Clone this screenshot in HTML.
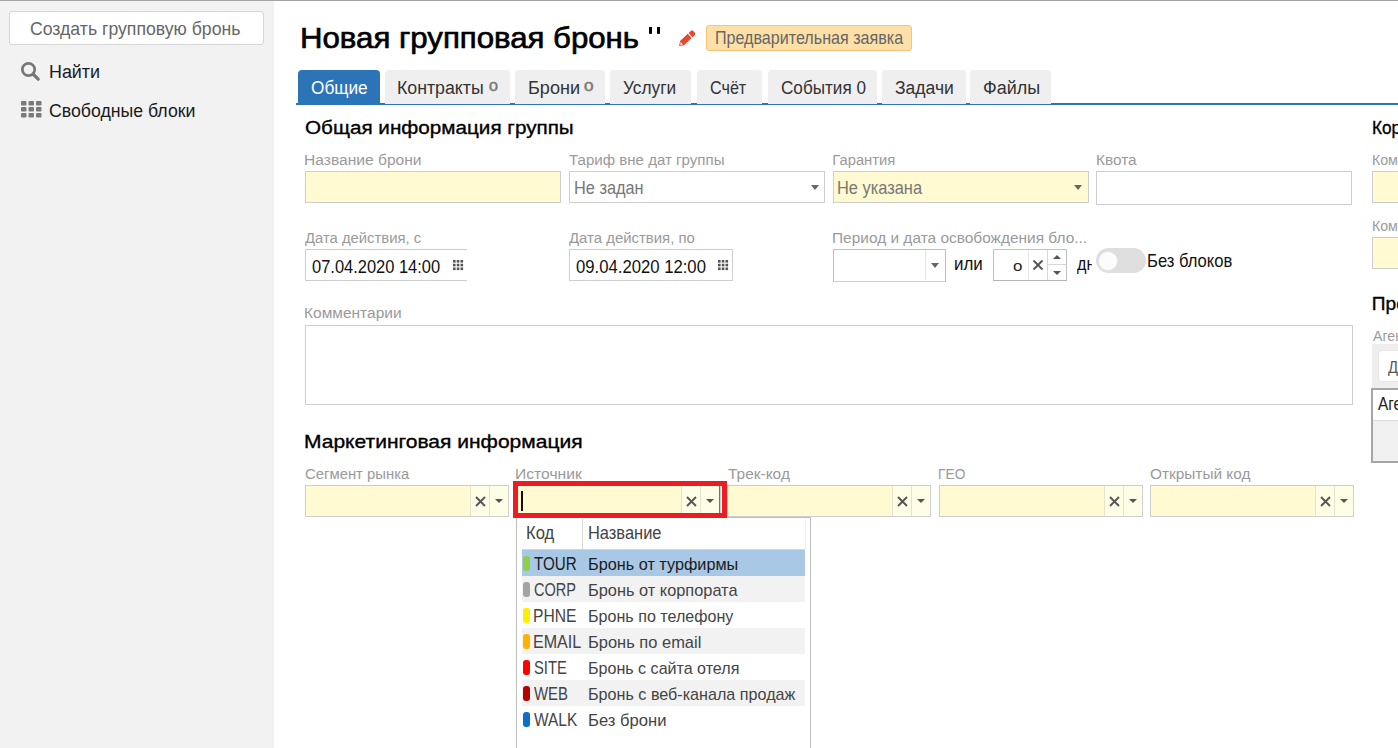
<!DOCTYPE html>
<html><head><meta charset="utf-8">
<style>
*{box-sizing:border-box;margin:0;padding:0}
html,body{width:1398px;height:748px;overflow:hidden;background:#fff;font-family:"Liberation Sans",sans-serif;color:#222;position:relative}
.a{position:absolute;white-space:nowrap}
</style></head><body>
<div class="a" style="left:0px;top:0px;width:1398px;height:1px;background:#a3a3a3;"></div>
<div class="a" style="left:0px;top:1px;width:274px;height:747px;background:#f2f2f2;"></div>
<div class="a" style="left:9px;top:11px;width:255px;height:34px;background:#fff;border:1px solid #d6d6d6;border-radius:3px;"></div>
<div class="a" style="left:30.42px;top:20.16px;font-size:18.72px;line-height:18.72px;color:#666;transform:scaleX(0.9438);transform-origin:0 0;">Создать групповую бронь</div>
<svg class="a" style="left:20px;top:61px" width="21" height="21" viewBox="0 0 21 21">
<circle cx="8.5" cy="8.5" r="6.2" fill="none" stroke="#777" stroke-width="2.7"/>
<line x1="13" y1="13" x2="18.2" y2="18.2" stroke="#777" stroke-width="3.2" stroke-linecap="round"/></svg>
<div class="a" style="left:48.57px;top:62.64px;font-size:18.85px;line-height:18.85px;color:#1a1a1a;transform:scaleX(0.9488);transform-origin:0 0;">Найти</div>
<svg class="a" style="left:21px;top:101px" width="21" height="17" viewBox="0 0 21 17"><g fill="#7a7a7a"><rect x="0.0" y="0" width="5.5" height="4.5" rx="1"/><rect x="7.5" y="0" width="5.5" height="4.5" rx="1"/><rect x="15.0" y="0" width="5.5" height="4.5" rx="1"/><rect x="0.0" y="6" width="5.5" height="4.5" rx="1"/><rect x="7.5" y="6" width="5.5" height="4.5" rx="1"/><rect x="15.0" y="6" width="5.5" height="4.5" rx="1"/><rect x="0.0" y="12" width="5.5" height="4.5" rx="1"/><rect x="7.5" y="12" width="5.5" height="4.5" rx="1"/><rect x="15.0" y="12" width="5.5" height="4.5" rx="1"/></g></svg>
<div class="a" style="left:49.11px;top:102.27px;font-size:18.58px;line-height:18.58px;color:#1a1a1a;transform:scaleX(0.9529);transform-origin:0 0;">Свободные блоки</div>
<div class="a" style="left:299.51px;top:23.71px;font-size:28.69px;line-height:28.69px;color:#000;-webkit-text-stroke:0.65px #000;transform:scaleX(1.0867);transform-origin:0 0;">Новая групповая бронь</div>
<div class="a" style="left:649px;top:27px;width:3.4px;height:7px;background:#000;border-radius:0 0 1px 1px;"></div>
<div class="a" style="left:657px;top:27px;width:3.2px;height:7px;background:#000;border-radius:0 0 1px 1px;"></div>
<svg class="a" style="left:678px;top:29px" width="20" height="19" viewBox="0 0 20 19">
<g transform="translate(1.0,16.9) rotate(-43)">
<path d="M0,0 L4.2,-2.9 L14.6,-2.9 L14.6,2.9 L4.2,2.9 Z" fill="#e64a2e"/>
<path d="M1.6,0 L3.9,-1.6 L3.9,1.6 Z" fill="#fff"/>
<path d="M15.7,-2.9 L18.9,-2.9 Q20.6,-2.9 20.6,-1.2 L20.6,1.2 Q20.6,2.9 18.9,2.9 L15.7,2.9 Z" fill="#e64a2e"/>
</g></svg>
<div class="a" style="left:706px;top:25px;width:206px;height:26px;background:#fde0a8;border:1px solid #f8c27a;border-radius:3px;"></div>
<div class="a" style="left:714.71px;top:30.08px;font-size:17.63px;line-height:17.63px;color:#666;transform:scaleX(0.9139);transform-origin:0 0;">Предварительная заявка</div>
<div class="a" style="left:296px;top:103px;width:1102px;height:2px;background:#2c74b8;"></div>
<div class="a" style="left:298px;top:70px;width:82px;height:34px;background:#2c74b8;border-radius:4px 4px 0 0;"></div>
<div class="a" style="left:311.14px;top:77.72px;font-size:18.99px;line-height:18.99px;color:#fff;transform:scaleX(0.9079);transform-origin:0 0;">Общие</div>
<div class="a" style="left:385px;top:70px;width:125px;height:34px;background:#efefef;border-radius:4px 4px 0 0;"></div>
<div class="a" style="left:397.48px;top:77.72px;font-size:18.99px;line-height:18.99px;color:#333;transform:scaleX(0.9343);transform-origin:0 0;">Контракты</div>
<div class="a" style="left:489.26px;top:80.21px;font-size:12.98px;line-height:12.98px;color:#777;-webkit-text-stroke:0.45px #777;transform:scaleX(1.2359);transform-origin:0 0;">0</div>
<div class="a" style="left:515px;top:70px;width:90px;height:34px;background:#efefef;border-radius:4px 4px 0 0;"></div>
<div class="a" style="left:527.56px;top:77.72px;font-size:18.99px;line-height:18.99px;color:#333;transform:scaleX(0.9509);transform-origin:0 0;">Брони</div>
<div class="a" style="left:583.62px;top:80.21px;font-size:12.98px;line-height:12.98px;color:#777;-webkit-text-stroke:0.45px #777;transform:scaleX(1.3162);transform-origin:0 0;">0</div>
<div class="a" style="left:610px;top:70px;width:81px;height:34px;background:#efefef;border-radius:4px 4px 0 0;"></div>
<div class="a" style="left:623.18px;top:77.72px;font-size:18.99px;line-height:18.99px;color:#333;transform:scaleX(0.9100);transform-origin:0 0;">Услуги</div>
<div class="a" style="left:697px;top:70px;width:65px;height:34px;background:#efefef;border-radius:4px 4px 0 0;"></div>
<div class="a" style="left:709.59px;top:77.72px;font-size:18.99px;line-height:18.99px;color:#333;transform:scaleX(0.8502);transform-origin:0 0;">Счёт</div>
<div class="a" style="left:768px;top:70px;width:109px;height:34px;background:#efefef;border-radius:4px 4px 0 0;"></div>
<div class="a" style="left:780.54px;top:77.72px;font-size:18.99px;line-height:18.99px;color:#333;transform:scaleX(0.9021);transform-origin:0 0;">События 0</div>
<div class="a" style="left:882px;top:70px;width:84px;height:34px;background:#efefef;border-radius:4px 4px 0 0;"></div>
<div class="a" style="left:894.97px;top:77.72px;font-size:18.99px;line-height:18.99px;color:#333;transform:scaleX(0.9223);transform-origin:0 0;">Задачи</div>
<div class="a" style="left:970px;top:70px;width:81px;height:34px;background:#efefef;border-radius:4px 4px 0 0;"></div>
<div class="a" style="left:982.62px;top:77.72px;font-size:18.99px;line-height:18.99px;color:#333;transform:scaleX(0.9495);transform-origin:0 0;">Файлы</div>
<div class="a" style="left:304.57px;top:117.81px;font-size:19.13px;line-height:19.13px;color:#000;-webkit-text-stroke:0.35px #000;transform:scaleX(1.0817);transform-origin:0 0;">Общая информация группы</div>
<div class="a" style="left:304.12px;top:432.50px;font-size:18.31px;line-height:18.31px;color:#000;-webkit-text-stroke:0.35px #000;transform:scaleX(1.1487);transform-origin:0 0;">Маркетинговая информация</div>
<div class="a" style="left:1372.02px;top:117.81px;font-size:19.13px;line-height:19.13px;color:#000;-webkit-text-stroke:0.35px #000;transform:scaleX(0.9000);transform-origin:0 0;">Корпоративный клиент</div>
<div class="a" style="left:1371.87px;top:293.81px;font-size:19.13px;line-height:19.13px;color:#000;-webkit-text-stroke:0.35px #000;">Продажи</div>
<div class="a" style="left:304.05px;top:153.01px;font-size:14.76px;line-height:14.76px;color:#9a9a9a;transform:scaleX(1.0564);transform-origin:0 0;">Название брони</div>
<div class="a" style="left:569.00px;top:153.01px;font-size:14.76px;line-height:14.76px;color:#9a9a9a;transform:scaleX(1.0215);transform-origin:0 0;">Тариф вне дат группы</div>
<div class="a" style="left:832.32px;top:153.01px;font-size:14.76px;line-height:14.76px;color:#9a9a9a;">Гарантия</div>
<div class="a" style="left:1095.57px;top:153.01px;font-size:14.76px;line-height:14.76px;color:#9a9a9a;transform:scaleX(1.0430);transform-origin:0 0;">Квота</div>
<div class="a" style="left:305.15px;top:231.01px;font-size:14.76px;line-height:14.76px;color:#9a9a9a;transform:scaleX(1.0044);transform-origin:0 0;">Дата действия, с</div>
<div class="a" style="left:569.15px;top:231.01px;font-size:14.76px;line-height:14.76px;color:#9a9a9a;transform:scaleX(1.0113);transform-origin:0 0;">Дата действия, по</div>
<div class="a" style="left:832.06px;top:231.01px;font-size:14.76px;line-height:14.76px;color:#9a9a9a;transform:scaleX(1.0470);transform-origin:0 0;">Период и дата освобождения бло...</div>
<div class="a" style="left:304.16px;top:306.01px;font-size:14.76px;line-height:14.76px;color:#9a9a9a;transform:scaleX(1.0502);transform-origin:0 0;">Комментарии</div>
<div class="a" style="left:304.66px;top:467.01px;font-size:14.76px;line-height:14.76px;color:#9a9a9a;transform:scaleX(1.0073);transform-origin:0 0;">Сегмент рынка</div>
<div class="a" style="left:515.05px;top:467.01px;font-size:14.76px;line-height:14.76px;color:#9a9a9a;transform:scaleX(1.0610);transform-origin:0 0;">Источник</div>
<div class="a" style="left:727.69px;top:467.01px;font-size:14.76px;line-height:14.76px;color:#9a9a9a;transform:scaleX(1.0481);transform-origin:0 0;">Трек-код</div>
<div class="a" style="left:938.30px;top:467.01px;font-size:14.76px;line-height:14.76px;color:#9a9a9a;transform:scaleX(0.9327);transform-origin:0 0;">ГЕО</div>
<div class="a" style="left:1149.83px;top:467.01px;font-size:14.76px;line-height:14.76px;color:#9a9a9a;transform:scaleX(1.0428);transform-origin:0 0;">Открытый код</div>
<div class="a" style="left:1371.87px;top:153.01px;font-size:14.76px;line-height:14.76px;color:#9a9a9a;transform:scaleX(0.9600);transform-origin:0 0;">Компания</div>
<div class="a" style="left:1371.87px;top:219.01px;font-size:14.76px;line-height:14.76px;color:#9a9a9a;transform:scaleX(0.9600);transform-origin:0 0;">Компания</div>
<div class="a" style="left:1373.00px;top:329.01px;font-size:14.76px;line-height:14.76px;color:#9a9a9a;transform:scaleX(0.9600);transform-origin:0 0;">Агентство</div>
<div class="a" style="left:305px;top:171px;width:256px;height:32px;background:#fffad2;border:1px solid #cecece;"></div>
<div class="a" style="left:569px;top:171px;width:256px;height:32px;background:#fff;border:1px solid #cecece;"></div>
<div class="a" style="left:573.89px;top:178.63px;font-size:18.03px;line-height:18.03px;color:#777;transform:scaleX(0.9066);transform-origin:0 0;">Не задан</div>
<div class="a" style="left:811px;top:185px;width:0;height:0;border-left:4.0px solid transparent;border-right:4.0px solid transparent;border-top:5px solid #666"></div>
<div class="a" style="left:833px;top:171px;width:256px;height:32px;background:#fffad2;border:1px solid #cecece;"></div>
<div class="a" style="left:837.39px;top:178.63px;font-size:18.03px;line-height:18.03px;color:#777;transform:scaleX(0.9104);transform-origin:0 0;">Не указана</div>
<div class="a" style="left:1074px;top:185px;width:0;height:0;border-left:4.0px solid transparent;border-right:4.0px solid transparent;border-top:5px solid #666"></div>
<div class="a" style="left:1096px;top:171px;width:256px;height:34px;background:#fff;border:1px solid #cecece;"></div>
<div class="a" style="left:305px;top:249px;width:162px;height:32px;background:#fff;border:1px solid #cecece;border-right:none;"></div>
<div class="a" style="left:312.34px;top:257.70px;font-size:18.31px;line-height:18.31px;color:#111;transform:scaleX(0.8994);transform-origin:0 0;">07.04.2020 14:00</div>
<svg class="a" style="left:453px;top:260px" width="11" height="11" viewBox="0 0 11 11"><g fill="#555"><rect x="0.0" y="0.0" width="2.6" height="2.6"/><rect x="3.75" y="0.0" width="2.6" height="2.6"/><rect x="7.5" y="0.0" width="2.6" height="2.6"/><rect x="0.0" y="3.75" width="2.6" height="2.6"/><rect x="3.75" y="3.75" width="2.6" height="2.6"/><rect x="7.5" y="3.75" width="2.6" height="2.6"/><rect x="0.0" y="7.5" width="2.6" height="2.6"/><rect x="3.75" y="7.5" width="2.6" height="2.6"/><rect x="7.5" y="7.5" width="2.6" height="2.6"/></g></svg>
<div class="a" style="left:569px;top:249px;width:164px;height:32px;background:#fff;border:1px solid #cecece;"></div>
<div class="a" style="left:576.33px;top:257.70px;font-size:18.31px;line-height:18.31px;color:#111;transform:scaleX(0.9122);transform-origin:0 0;">09.04.2020 12:00</div>
<svg class="a" style="left:718px;top:260px" width="11" height="11" viewBox="0 0 11 11"><g fill="#555"><rect x="0.0" y="0.0" width="2.6" height="2.6"/><rect x="3.75" y="0.0" width="2.6" height="2.6"/><rect x="7.5" y="0.0" width="2.6" height="2.6"/><rect x="0.0" y="3.75" width="2.6" height="2.6"/><rect x="3.75" y="3.75" width="2.6" height="2.6"/><rect x="7.5" y="3.75" width="2.6" height="2.6"/><rect x="0.0" y="7.5" width="2.6" height="2.6"/><rect x="3.75" y="7.5" width="2.6" height="2.6"/><rect x="7.5" y="7.5" width="2.6" height="2.6"/></g></svg>
<div class="a" style="left:833px;top:249px;width:113px;height:33px;background:#fff;border:1px solid #c0c0c0;border-bottom-color:#cfcfcf;"></div>
<div class="a" style="left:925px;top:250px;width:1px;height:30px;background:#e3e3e3;"></div>
<div class="a" style="left:931px;top:263px;width:0;height:0;border-left:4.0px solid transparent;border-right:4.0px solid transparent;border-top:5px solid #666"></div>
<div class="a" style="left:954.42px;top:254.97px;font-size:18.94px;line-height:18.94px;color:#111;transform:scaleX(0.8935);transform-origin:0 0;">или</div>
<div class="a" style="left:993px;top:249px;width:74px;height:32px;background:#fff;border:1px solid #c2c2c2;border-bottom-color:#b5b5b5;"></div>
<div class="a" style="left:1012.93px;top:258.99px;font-size:14.77px;line-height:14.77px;color:#222;transform:scaleX(1.1423);transform-origin:0 0;">о</div>
<div class="a" style="left:1028px;top:250px;width:1px;height:30px;background:#e6e6e6;"></div>
<div class="a" style="left:1047px;top:250px;width:1px;height:30px;background:#d8d8d8;"></div>
<div class="a" style="left:1048px;top:264px;width:18px;height:1px;background:#d8d8d8;"></div>
<svg class="a" style="left:1032px;top:259px" width="12" height="12" viewBox="0 0 12 12"><path d="M1.5 1.5L10.5 10.5M10.5 1.5L1.5 10.5" stroke="#555" stroke-width="1.8"/></svg>
<div class="a" style="left:1053px;top:255px;width:0;height:0;border-left:4px solid transparent;border-right:4px solid transparent;border-bottom:4px solid #555"></div>
<div class="a" style="left:1053px;top:271px;width:0;height:0;border-left:4.0px solid transparent;border-right:4.0px solid transparent;border-top:4px solid #555"></div>
<div class="a" style="left:1076.84px;top:255.29px;font-size:18.56px;line-height:18.56px;color:#111;transform:scaleX(0.8700);transform-origin:0 0;width:16.7px;overflow:hidden;">дн</div>
<div class="a" style="left:1096px;top:248px;width:50px;height:25px;background:#dedede;border-radius:13px;"></div>
<div class="a" style="left:1098px;top:251px;width:20px;height:20px;background:#fcfcfc;border:1px solid #e6e6e6;border-radius:50%;"></div>
<div class="a" style="left:1147.27px;top:251.50px;font-size:18.31px;line-height:18.31px;color:#111;transform:scaleX(0.9064);transform-origin:0 0;">Без блоков</div>
<div class="a" style="left:305px;top:325px;width:1048px;height:80px;background:#fff;border:1px solid #cecece;"></div>
<div class="a" style="left:305px;top:485px;width:204px;height:32px;background:#fffad2;border:1px solid #cecece;"></div>
<div class="a" style="left:470px;top:486px;width:38px;height:30px;background:#fffde6;"></div>
<div class="a" style="left:470px;top:486px;width:1px;height:30px;background:#e6e2cc;"></div>
<div class="a" style="left:489px;top:486px;width:1px;height:30px;background:#e6e2cc;"></div>
<svg class="a" style="left:475px;top:496px" width="11" height="11" viewBox="0 0 11 11"><path d="M1 1L10 10M10 1L1 10" stroke="#555" stroke-width="1.9"/></svg>
<div class="a" style="left:495px;top:499px;width:0;height:0;border-left:4.0px solid transparent;border-right:4.0px solid transparent;border-top:4px solid #555"></div>
<div class="a" style="left:516px;top:485px;width:205px;height:32px;background:#fffad2;border:1px solid #cecece;"></div>
<div class="a" style="left:681px;top:486px;width:39px;height:30px;background:#fffde6;"></div>
<div class="a" style="left:681px;top:486px;width:1px;height:30px;background:#e6e2cc;"></div>
<div class="a" style="left:700px;top:486px;width:1px;height:30px;background:#e6e2cc;"></div>
<svg class="a" style="left:686px;top:496px" width="11" height="11" viewBox="0 0 11 11"><path d="M1 1L10 10M10 1L1 10" stroke="#555" stroke-width="1.9"/></svg>
<div class="a" style="left:706px;top:499px;width:0;height:0;border-left:4.0px solid transparent;border-right:4.0px solid transparent;border-top:4px solid #555"></div>
<div class="a" style="left:727px;top:485px;width:204px;height:32px;background:#fffad2;border:1px solid #cecece;"></div>
<div class="a" style="left:892px;top:486px;width:38px;height:30px;background:#fffde6;"></div>
<div class="a" style="left:892px;top:486px;width:1px;height:30px;background:#e6e2cc;"></div>
<div class="a" style="left:911px;top:486px;width:1px;height:30px;background:#e6e2cc;"></div>
<svg class="a" style="left:897px;top:496px" width="11" height="11" viewBox="0 0 11 11"><path d="M1 1L10 10M10 1L1 10" stroke="#555" stroke-width="1.9"/></svg>
<div class="a" style="left:917px;top:499px;width:0;height:0;border-left:4.0px solid transparent;border-right:4.0px solid transparent;border-top:4px solid #555"></div>
<div class="a" style="left:939px;top:485px;width:204px;height:32px;background:#fffad2;border:1px solid #cecece;"></div>
<div class="a" style="left:1104px;top:486px;width:38px;height:30px;background:#fffde6;"></div>
<div class="a" style="left:1104px;top:486px;width:1px;height:30px;background:#e6e2cc;"></div>
<div class="a" style="left:1123px;top:486px;width:1px;height:30px;background:#e6e2cc;"></div>
<svg class="a" style="left:1109px;top:496px" width="11" height="11" viewBox="0 0 11 11"><path d="M1 1L10 10M10 1L1 10" stroke="#555" stroke-width="1.9"/></svg>
<div class="a" style="left:1129px;top:499px;width:0;height:0;border-left:4.0px solid transparent;border-right:4.0px solid transparent;border-top:4px solid #555"></div>
<div class="a" style="left:1150px;top:485px;width:204px;height:32px;background:#fffad2;border:1px solid #cecece;"></div>
<div class="a" style="left:1315px;top:486px;width:38px;height:30px;background:#fffde6;"></div>
<div class="a" style="left:1315px;top:486px;width:1px;height:30px;background:#e6e2cc;"></div>
<div class="a" style="left:1334px;top:486px;width:1px;height:30px;background:#e6e2cc;"></div>
<svg class="a" style="left:1320px;top:496px" width="11" height="11" viewBox="0 0 11 11"><path d="M1 1L10 10M10 1L1 10" stroke="#555" stroke-width="1.9"/></svg>
<div class="a" style="left:1340px;top:499px;width:0;height:0;border-left:4.0px solid transparent;border-right:4.0px solid transparent;border-top:4px solid #555"></div>
<div class="a" style="left:1372px;top:171px;width:60px;height:32px;background:#fffad2;border:1px solid #cecece;"></div>
<div class="a" style="left:1372px;top:237px;width:60px;height:32px;background:#fffad2;border:1px solid #cecece;"></div>
<div class="a" style="left:1372px;top:344px;width:40px;height:45px;background:#eeeeee;"></div>
<div class="a" style="left:1378px;top:350px;width:40px;height:32px;background:#fff;border:1px solid #e6e6e6;border-radius:4px;"></div>
<div class="a" style="left:1387.85px;top:358.84px;font-size:17.08px;line-height:17.08px;color:#555;transform:scaleX(0.8700);transform-origin:0 0;">Добавить</div>
<div class="a" style="left:1371px;top:388px;width:40px;height:75px;background:#f0f0f0;border:2px solid #a6a6a6;border-right:none;"></div>
<div class="a" style="left:1373px;top:390px;width:40px;height:31px;background:#fff;border-bottom:1px solid #dedede;"></div>
<div class="a" style="left:1377.70px;top:396.46px;font-size:17.76px;line-height:17.76px;color:#222;transform:scaleX(0.8700);transform-origin:0 0;">Агент</div>
<div class="a" style="left:516px;top:517px;width:295px;height:240px;background:#fff;border:1px solid #bdbdbd;"></div>
<div class="a" style="left:582px;top:519px;width:1px;height:30px;background:#d8d8d8;"></div>
<div class="a" style="left:522px;top:549px;width:283px;height:1px;background:#d6d3d0;"></div>
<div class="a" style="left:805px;top:519px;width:1px;height:30px;background:#efefef;"></div>
<div class="a" style="left:525.77px;top:525.08px;font-size:17.63px;line-height:17.63px;color:#444;transform:scaleX(0.9445);transform-origin:0 0;">Код</div>
<div class="a" style="left:587.88px;top:525.08px;font-size:17.63px;line-height:17.63px;color:#444;transform:scaleX(0.9334);transform-origin:0 0;">Название</div>
<div class="a" style="left:522px;top:550px;width:283px;height:26px;background:#a9c8e6;"></div>
<div class="a" style="left:523px;top:556px;width:7px;height:15px;background:#8ed04c;border-radius:3px;"></div>
<div class="a" style="left:534.00px;top:554.55px;font-size:18.60px;line-height:18.60px;color:#1a1a1a;transform:scaleX(0.8161);transform-origin:0 0;">TOUR</div>
<div class="a" style="left:588.20px;top:555.73px;font-size:17.22px;line-height:17.22px;color:#1a1a1a;transform:scaleX(0.9447);transform-origin:0 0;">Бронь от турфирмы</div>
<div class="a" style="left:522px;top:576px;width:283px;height:26px;background:#f2f2f2;"></div>
<div class="a" style="left:523px;top:582px;width:7px;height:15px;background:#a3a3a3;border-radius:3px;"></div>
<div class="a" style="left:533.57px;top:580.55px;font-size:18.60px;line-height:18.60px;color:#444;transform:scaleX(0.7822);transform-origin:0 0;">CORP</div>
<div class="a" style="left:588.19px;top:581.73px;font-size:17.22px;line-height:17.22px;color:#444;transform:scaleX(0.9508);transform-origin:0 0;">Бронь от корпората</div>
<div class="a" style="left:522px;top:602px;width:283px;height:26px;background:#fff;"></div>
<div class="a" style="left:523px;top:608px;width:7px;height:15px;background:#ffee00;border-radius:3px;"></div>
<div class="a" style="left:533.05px;top:606.55px;font-size:18.60px;line-height:18.60px;color:#444;transform:scaleX(0.8406);transform-origin:0 0;">PHNE</div>
<div class="a" style="left:588.21px;top:607.73px;font-size:17.22px;line-height:17.22px;color:#444;transform:scaleX(0.9349);transform-origin:0 0;">Бронь по телефону</div>
<div class="a" style="left:522px;top:628px;width:283px;height:26px;background:#f2f2f2;"></div>
<div class="a" style="left:523px;top:634px;width:7px;height:15px;background:#ffb300;border-radius:3px;"></div>
<div class="a" style="left:533.01px;top:632.55px;font-size:18.60px;line-height:18.60px;color:#444;transform:scaleX(0.8641);transform-origin:0 0;">EMAIL</div>
<div class="a" style="left:588.18px;top:633.73px;font-size:17.22px;line-height:17.22px;color:#444;transform:scaleX(0.9567);transform-origin:0 0;">Бронь по email</div>
<div class="a" style="left:522px;top:654px;width:283px;height:26px;background:#fff;"></div>
<div class="a" style="left:523px;top:660px;width:7px;height:15px;background:#ff0000;border-radius:3px;"></div>
<div class="a" style="left:533.56px;top:658.55px;font-size:18.60px;line-height:18.60px;color:#444;transform:scaleX(0.7962);transform-origin:0 0;">SITE</div>
<div class="a" style="left:588.21px;top:659.73px;font-size:17.22px;line-height:17.22px;color:#444;transform:scaleX(0.9337);transform-origin:0 0;">Бронь с сайта отеля</div>
<div class="a" style="left:522px;top:680px;width:283px;height:26px;background:#f2f2f2;"></div>
<div class="a" style="left:523px;top:686px;width:7px;height:15px;background:#b30000;border-radius:3px;"></div>
<div class="a" style="left:534.30px;top:684.55px;font-size:18.60px;line-height:18.60px;color:#444;transform:scaleX(0.8026);transform-origin:0 0;">WEB</div>
<div class="a" style="left:588.21px;top:685.73px;font-size:17.22px;line-height:17.22px;color:#444;transform:scaleX(0.9378);transform-origin:0 0;">Бронь с веб-канала продаж</div>
<div class="a" style="left:522px;top:706px;width:283px;height:26px;background:#fff;"></div>
<div class="a" style="left:523px;top:712px;width:7px;height:15px;background:#0a6fc9;border-radius:3px;"></div>
<div class="a" style="left:534.30px;top:710.55px;font-size:18.60px;line-height:18.60px;color:#444;transform:scaleX(0.8314);transform-origin:0 0;">WALK</div>
<div class="a" style="left:588.17px;top:711.73px;font-size:17.22px;line-height:17.22px;color:#444;transform:scaleX(0.9660);transform-origin:0 0;">Без брони</div>
<div class="a" style="left:719px;top:486px;width:1px;height:30px;background:#3a7bd5;"></div>
<div class="a" style="left:521px;top:491px;width:2px;height:20px;background:#111;"></div>
<div class="a" style="left:513px;top:481px;width:214px;height:37px;border:5px solid #ec1c24;"></div>
</body></html>
